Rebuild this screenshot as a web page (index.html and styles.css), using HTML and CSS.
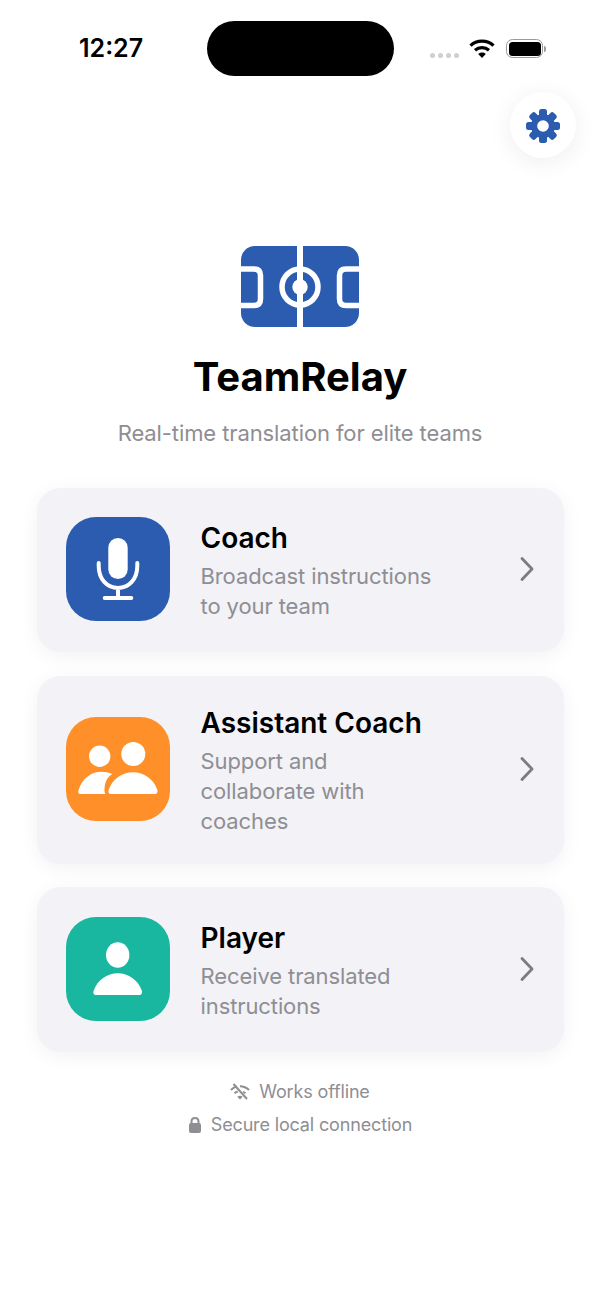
FILE: index.html
```html
<!DOCTYPE html>
<html lang="en">
<head>
<meta charset="utf-8">
<title>TeamRelay</title>
<link rel="stylesheet" href="styles.css">
</head>
<body>
<div class="screen">
  <header class="status">
    <span class="time">12:27</span>
    <span class="island"></span>
    <span class="status-icons">
      <span class="signal"><i></i><i></i><i></i><i></i></span>
      <svg class="wifi" width="26" height="19" viewBox="0 0 26 19"><path d="M1.500 6.700C7.500 0.700 18.500 0.700 24.500 6.700" class="wifi-arc"/><path d="M6 11.300C10 7.800 16 7.800 20 11.300" class="wifi-arc"/><path d="M13 19L9.200 15C11.500 13.100 14.500 13.100 16.800 15Z" class="wifi-dot"/></svg>
      <span class="battery"><span class="battery-fill"></span></span>
      <span class="battery-cap"></span>
    </span>
  </header>
  <div class="toolbar">
    <button class="gear-btn" aria-label="Settings">
      <svg class="gear-svg" width="36" height="36" viewBox="0 0 36 36"><g class="gear"><rect x="14" y="1" width="8" height="34" rx="2.500"/><rect x="14" y="1" width="8" height="34" rx="2.500" transform="rotate(45 18 18)"/><rect x="14" y="1" width="8" height="34" rx="2.500" transform="rotate(90 18 18)"/><rect x="14" y="1" width="8" height="34" rx="2.500" transform="rotate(135 18 18)"/><circle cx="18" cy="18" r="12"/></g><circle class="gear-hole" cx="18" cy="18" r="5.800"/></svg>
    </button>
  </div>
  <section class="hero">
    <svg class="logo" width="118" height="81" viewBox="0 0 118 81">
      <rect class="logo-bg" width="118" height="81" rx="14"/>
      <path class="logo-center" d="M59 0V81"/>
      <circle class="logo-line" cx="59" cy="41" r="18"/>
      <circle class="logo-spot" cx="59" cy="41" r="7.700"/>
      <path class="logo-line" d="M0 23H13Q19.500 23 19.500 29.500V53Q19.500 59.500 13 59.500H0"/>
      <path class="logo-line" d="M118 23H105Q98.500 23 98.500 29.500V53Q98.500 59.500 105 59.500H118"/>
    </svg>
    <h1 class="title">TeamRelay</h1>
    <p class="subtitle">Real-time translation for elite teams</p>
  </section>
  <main class="cards">
    <article class="card">
      <span class="tile tile-blue">
        <svg width="104" height="104" viewBox="0 0 104 104"><rect class="ico-fill" x="42.300" y="21" width="19.400" height="41" rx="9.700"/><path class="ico-line" d="M32.700 46V49C32.700 62 41 71 52 71S71.300 62 71.300 49V46M52 71V81M38.700 81H65.300"/></svg>
      </span>
      <div class="copy">
        <h2 class="card-title">Coach</h2>
        <p class="card-desc">Broadcast instructions<br>to your team</p>
      </div>
      <svg class="chev" width="16" height="26" viewBox="0 0 16 26"><path d="M3 2.500L13 13L3 23.500"/></svg>
    </article>
    <article class="card">
      <span class="tile tile-orange">
        <svg width="104" height="104" viewBox="0 0 104 104"><circle class="ico-fill" cx="33.700" cy="39.300" r="10.700"/><circle class="ico-fill" cx="67.300" cy="37" r="12"/><path class="ico-fill" d="M15 77C12 77 11.700 75 12.800 72.500C16 62 25 54.700 35 54.700C39 54.700 43 55.500 46.300 57C41 60 38.500 66 38.500 73C38.500 75 38.800 76 39.500 77Z"/><path class="ico-fill" d="M45.500 77C42.500 77 41.800 75 42.800 72.500C46.500 62 56 55.300 67 55.300C78 55.300 87.500 62 91.200 72.500C92.200 75 91 77 88.500 77Z"/></svg>
      </span>
      <div class="copy">
        <h2 class="card-title">Assistant Coach</h2>
        <p class="card-desc">Support and<br>collaborate with<br>coaches</p>
      </div>
      <svg class="chev" width="16" height="26" viewBox="0 0 16 26"><path d="M3 2.500L13 13L3 23.500"/></svg>
    </article>
    <article class="card">
      <span class="tile tile-teal">
        <svg width="104" height="104" viewBox="0 0 104 104"><ellipse class="ico-fill" cx="51.700" cy="38" rx="11.700" ry="12.700"/><path class="ico-fill" d="M30.500 78C27.500 78 26.800 76 27.800 73.500C31.500 63 41 56.300 51.800 56.300C62.500 56.300 72 63 75.800 73.500C76.800 76 75.500 78 73 78Z"/></svg>
      </span>
      <div class="copy">
        <h2 class="card-title">Player</h2>
        <p class="card-desc">Receive translated<br>instructions</p>
      </div>
      <svg class="chev" width="16" height="26" viewBox="0 0 16 26"><path d="M3 2.500L13 13L3 23.500"/></svg>
    </article>
  </main>
  <footer class="notes">
    <p class="note">
      <svg width="20" height="18" viewBox="0 0 20 18"><path class="note-arc" d="M1 7C3 5 5 4 7 3.600M10 3.200C13 3.200 16.500 4.500 19 7M4.500 10.300C5.500 9.400 6.500 8.800 7.800 8.500M13 8.900C14 9.200 14.800 9.700 15.500 10.300"/><path class="note-fill" d="M10 16.500L7.300 13.700C8.800 12.400 11.200 12.400 12.700 13.700Z"/><path class="note-arc" d="M3.500 1L17 16"/></svg>
      <span>Works offline</span>
    </p>
    <p class="note">
      <svg width="14" height="18" viewBox="0 0 14 18"><path class="note-arc" d="M3.500 8V5.500C3.500 3.300 5 2 7 2S10.500 3.300 10.500 5.500V8"/><rect class="note-fill" x="1" y="7" width="12" height="10" rx="2"/></svg>
      <span>Secure local connection</span>
    </p>
  </footer>
</div>
</body>
</html>
```
FILE: styles.css
```css
* { box-sizing: border-box; }
html, body { margin: 0; padding: 0; background: #fff; }
body { font-family: Inter, "Liberation Sans", sans-serif; }
.screen { width: 600px; height: 1304px; overflow: hidden; }
p, h1, h2 { margin: 0; }

.status { height: 92px; padding: 21px 54px 0 79px; display: flex; align-items: flex-start; }
.time { width: 128px; padding-top: 11px; font-size: 25px; line-height: 32px; font-weight: 600; color: #000; }
.island { width: 187px; height: 55px; border-radius: 28px; background: #000; flex: none; }
.status-icons { display: flex; align-items: flex-end; margin-left: 36px; margin-top: 18px; height: 19px; }
.signal { display: flex; gap: 2.500px; }
.signal i { width: 5.500px; height: 5.500px; border-radius: 50%; background: #cfcfd1; }
.wifi { margin-left: 10px; display: block; }
.wifi-arc { fill: none; stroke: #000; stroke-width: 3.200px; }
.wifi-dot { fill: #000; }
.battery { width: 37px; height: 19px; margin-left: 11px; border: 1.500px solid #9a9a9c; border-radius: 6.500px; padding: 1.500px; display: flex; }
.battery-fill { flex: 1; border-radius: 3.500px; background: #000; }
.battery-cap { width: 2px; height: 6px; margin-left: 1px; margin-bottom: 6.500px; border-radius: 0 2px 2px 0; background: #9a9a9c; }

.toolbar { display: flex; justify-content: flex-end; padding-right: 24px; }
.gear-btn { width: 66px; height: 66px; border: 0; padding: 1px 0 0; border-radius: 50%; background: #fff; box-shadow: 0 4px 24px rgba(0,0,0,.07); display: flex; align-items: center; justify-content: center; }
.gear-svg { display: block; }
.gear { fill: #2b5cb0; }
.gear-hole { fill: #fff; }

.hero { margin-top: 88px; display: flex; flex-direction: column; align-items: center; }
.logo { display: block; }
.logo-bg { fill: #2b5cb0; }
.logo-line { fill: none; stroke: #fff; stroke-width: 5.500px; }
.logo-center { fill: none; stroke: #fff; stroke-width: 6px; }
.logo-spot { fill: #fff; }
.title { margin-top: 24px; font-size: 40px; line-height: 52px; font-weight: 700; color: #000; }
.subtitle { margin-top: 15px; font-size: 22px; line-height: 30px; color: #8e8e93; letter-spacing: -0.1px; }

.cards { margin-top: 40px; padding: 0 36px 0 37px; display: flex; flex-direction: column; gap: 23.500px; }
.card { min-height: 164px; padding: 0 29px; background: #f2f2f7; border-radius: 24px; display: flex; align-items: center; box-shadow: 0 4px 20px rgba(0,0,0,.055); }
.card:last-child { min-height: 165px; }
.tile { width: 104px; height: 104px; margin-bottom: 1.500px; border-radius: 30px; flex: none; display: block; }
.tile svg { display: block; }
.tile-blue { background: #2b5cb0; }
.tile-orange { background: #ff8f28; }
.tile-teal { background: #19b6a0; }
.ico-fill { fill: #fff; }
.ico-line { fill: none; stroke: #fff; stroke-width: 4px; stroke-linecap: round; }
.copy { flex: 1; margin-left: 30.500px; padding: 30px 0 28px; }
.card-title { font-size: 28px; line-height: 34px; font-weight: 600; color: #000; }
.card-desc { margin-top: 6px; font-size: 22px; line-height: 30px; color: #8e8e93; letter-spacing: -0.1px; }
.chev { flex: none; margin-bottom: 1.500px; }
.chev path { fill: none; stroke: #7c7c80; stroke-width: 2.800px; stroke-linecap: round; stroke-linejoin: round; }

.notes { margin-top: 28px; display: flex; flex-direction: column; align-items: center; gap: 9px; }
.note { display: flex; align-items: center; gap: 9px; font-size: 18px; line-height: 24px; color: #8e8e93; letter-spacing: -0.15px; }
.note-arc { fill: none; stroke: #8e8e93; stroke-width: 2px; }
.note-fill { fill: #8e8e93; }
```
